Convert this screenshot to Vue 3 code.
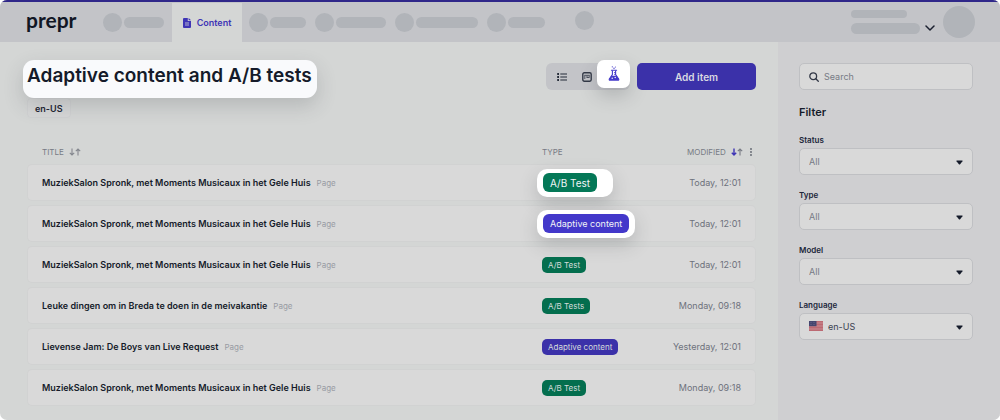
<script setup>
const before = [40]
const after = [36, 50, 62, 37]
const page = 'MuziekSalon Spronk, met Moments Musicaux in het Gele Huis'
const rows = [
  { title: page, type: 'A/B Test', kind: 'test', lit: 'wide', modified: 'Today, 12:01' },
  { title: page, type: 'Adaptive content', kind: 'adaptive', lit: 'snug', modified: 'Today, 12:01' },
  { title: page, type: 'A/B Test', kind: 'test', modified: 'Today, 12:01' },
  { title: 'Leuke dingen om in Breda te doen in de meivakantie', type: 'A/B Tests', kind: 'test', modified: 'Monday, 09:18' },
  { title: 'Lievense Jam: De Boys van Live Request', type: 'Adaptive content', kind: 'adaptive', modified: 'Yesterday, 12:01' },
  { title: page, type: 'A/B Test', kind: 'test', modified: 'Monday, 09:18' },
]
const filters = [
  { id: 'status', label: 'Status', value: 'All' },
  { id: 'type', label: 'Type', value: 'All' },
  { id: 'model', label: 'Model', value: 'All' },
  { id: 'language', label: 'Language', value: 'en-US', flag: true },
]
</script>

<template>
  <div class="app">
    <header class="topbar">
      <a class="logo" href="#">prepr</a>
      <nav class="nav">
        <span v-for="w in before" :key="w" class="ghost">
          <i class="dot"></i><i class="pill" :style="{ width: w + 'px' }"></i>
        </span>
        <a class="tab" href="#" aria-current="page">
          <svg width="8" height="10" viewBox="0 0 8 10" aria-hidden="true">
            <path d="M1 0h3.8v3H8v6a1 1 0 0 1-1 1H1a1 1 0 0 1-1-1V1a1 1 0 0 1 1-1z" fill="#3f35b5" />
            <path d="M5.6 0 8 2.3H5.6z" fill="#3f35b5" />
            <path d="M2 5h4M2 7h4" stroke="#d4d6d5" stroke-width=".8" />
          </svg>
          Content
        </a>
        <span v-for="w in after" :key="w" class="ghost">
          <i class="dot"></i><i class="pill" :style="{ width: w + 'px' }"></i>
        </span>
        <i class="dot lone"></i>
      </nav>
      <div class="account">
        <div class="names"><i class="pill thin"></i><i class="pill"></i></div>
        <button class="bare" aria-label="Account menu">
          <svg width="10" height="6" viewBox="0 0 10 6" fill="none" stroke="#1b2130" stroke-width="1.5" stroke-linecap="round" stroke-linejoin="round"><path d="M1 1l4 4 4-4" /></svg>
        </button>
        <i class="avatar"></i>
      </div>
    </header>

    <div class="body">
      <main class="main">
        <div class="head">
          <h1>Adaptive content and A/B tests</h1>
          <div class="tools">
            <div class="views">
              <button aria-label="List view">
                <svg width="10" height="8" viewBox="0 0 10 8" stroke="#252b38"><path d="M3.3 1H10M3.3 4H10M3.3 7H10" stroke-width="1.2" /><path d="M.2 1h1.8M.2 4h1.8M.2 7h1.8" stroke-width="1.8" /></svg>
              </button>
              <button aria-label="Board view">
                <svg width="10" height="10" viewBox="0 0 10 10" fill="none" stroke="#333947"><rect x=".8" y=".8" width="8.4" height="8.4" rx="1.4" stroke-width="1.4" /><path d="M2.3 3.3h5.4M2.8 3.5v3.5M5 3.5v2M7.2 3.5v2M4.6 5.5h2.8" stroke-width=".8" /></svg>
              </button>
              <button class="active" aria-label="Experiments view">
                <svg width="12" height="15" viewBox="0 0 12 15" fill="none" stroke="#4338ca"><path d="M3.4 4.3h5.2" stroke-width="1.1" stroke-linecap="round" /><path d="M4.4 4.5v4L1.3 13c-.3.7 0 1.2.7 1.2h8c.7 0 1-.5.7-1.2L7.6 8.5v-4" stroke-width="1.1" /><path d="M3.4 9.8h5.2l2.1 3.2c.2.7 0 1-.6 1H2c-.6 0-.8-.3-.6-1z" fill="#4338ca" stroke="none" /><circle cx="4.2" cy="12.3" r=".7" fill="#fff" stroke="none" /><circle cx="7.2" cy="11.5" r=".7" fill="#fff" stroke="none" /><path d="M6 6.5h1.4M6 8.3h1.4" stroke-width=".8" /><g fill="#4338ca" stroke="none"><circle cx="4.3" cy=".8" r=".6" /><circle cx="6" cy="2.3" r=".7" /><circle cx="7.5" cy=".9" r=".5" /></g></svg>
              </button>
            </div>
            <button class="add">Add item</button>
          </div>
        </div>
        <button class="locale">en-US</button>

        <table>
          <thead>
            <tr>
              <th class="c-title">TITLE
                <svg class="sort" width="12" height="8" viewBox="0 0 12 8" fill="none" stroke="#85888f" stroke-width="1.1"><path d="M3 .5v6.5M.8 4.8 3 7l2.2-2.2M9 7.5V1M6.8 3.2 9 1l2.2 2.2" /></svg>
              </th>
              <th class="c-type">TYPE</th>
              <th class="c-mod">MODIFIED
                <svg class="sort" width="12" height="8" viewBox="0 0 12 8" fill="none" stroke-width="1.1"><path d="M3 .5v6.5M.8 4.8 3 7l2.2-2.2" stroke="#3f35b5" stroke-width="1.4" /><path d="M9 7.5V1M6.8 3.2 9 1l2.2 2.2" stroke="#777a84" /></svg>
                <button class="bare more" aria-label="Columns"><svg width="4" height="8" viewBox="0 0 4 8" fill="#5f636e"><circle cx="2" cy="1" r=".9" /><circle cx="2" cy="4" r=".9" /><circle cx="2" cy="7" r=".9" /></svg></button>
              </th>
            </tr>
          </thead>
          <tbody>
            <tr v-for="(r, i) in rows" :key="i">
              <td class="c-title"><strong>{{ r.title }}</strong><small>Page</small></td>
              <td class="c-type">
                <span :class="r.lit && ['spot', r.lit]"><span class="badge" :class="r.kind">{{ r.type }}</span></span>
              </td>
              <td class="c-mod">{{ r.modified }}</td>
            </tr>
          </tbody>
        </table>
      </main>

      <aside class="side">
        <div class="search">
          <svg width="10" height="10" viewBox="0 0 10 10" fill="none" stroke="#333947" stroke-width="1.3" stroke-linecap="round"><circle cx="4.2" cy="4.2" r="3.4" /><path d="M6.8 6.8 9.3 9.3" /></svg>
          <input type="search" placeholder="Search" aria-label="Search" />
        </div>
        <h2>Filter</h2>
        <div v-for="f in filters" :key="f.id" class="field">
          <label :for="f.id">{{ f.label }}</label>
          <div class="pick" :class="{ flagged: f.flag }">
            <svg v-if="f.flag" class="flag" width="14" height="10" viewBox="0 0 14 10" aria-hidden="true">
              <rect width="14" height="10" fill="#c98d93" />
              <path d="M0 .5h14M0 2h14M0 3.5h14M0 5h14M0 6.5h14M0 8h14M0 9.5h14" stroke="#b9606a" stroke-width=".8" />
              <rect width="7.5" height="5.2" fill="#45466f" />
              <path d="M1 1.5h6M1 3.5h6" stroke="#8587a5" stroke-width=".5" stroke-dasharray=".5 1" />
            </svg>
            <select :id="f.id"><option>{{ f.value }}</option></select>
            <svg class="caret" width="7" height="5" viewBox="0 0 8 5" aria-hidden="true"><path d="M1 .3h6q1 0 .4.8L4.7 4.4q-.7.7-1.4 0L.6 1.1Q0 .3 1 .3z" fill="#151b2a" /></svg>
          </div>
        </div>
      </aside>
    </div>
  </div>
</template>

<style>
body { margin: 0; background: #fff; }
</style>

<style scoped>
* { box-sizing: border-box; }
.app {
  display: flex; flex-direction: column; min-height: 100vh; overflow: hidden;
  border-radius: 7px; background: #d4d6d5; color: #151b2a;
  font-family: Inter, "Liberation Sans", sans-serif; font-size: 9px;
}
button, input, select { font: inherit; color: inherit; border: 0; background: none; padding: 0; margin: 0; }
svg { display: block; flex: none; }
.bare { display: inline-flex; }

.topbar { display: flex; height: 42px; border-top: 2px solid #2f2789; background: #c3c4c8; padding: 0 25px 0 26px; }
.logo {
  width: 68px; padding-top: 6px; color: #111624; text-decoration: none;
  font: 700 21px/24px Lato, sans-serif;
}
.nav { display: flex; flex: 1; align-items: center; }
.ghost { display: flex; align-items: center; gap: 2px; margin-left: 9px; }
.dot { width: 19px; height: 19px; border-radius: 50%; background: #b1b4b9; }
.pill { height: 11px; border-radius: 6px; background: #b1b4b9; }
.lone { margin: 0 0 4px 30px; }
.tab {
  display: flex; align-items: center; justify-content: center; gap: 6px; align-self: stretch;
  width: 70px; margin: 1px -2px 0 8px; background: #d4d6d5; color: #3f35b5;
  font-weight: 600; text-decoration: none;
}
.account { display: flex; align-items: center; gap: 5px; }
.account .bare { margin: 12px 3px 0 0; }
.names { display: flex; flex-direction: column; gap: 5px; width: 69px; }
.thin { width: 56px; height: 8px; }
.avatar { width: 32px; height: 32px; border-radius: 50%; background: #b1b4b9; }

.body { display: flex; flex: 1; }
.main { flex: 1; min-width: 0; padding: 18px 22px 10px 27px; }
.head { display: flex; justify-content: space-between; align-items: flex-start; }
h1 {
  margin: 0 0 0 -4px; padding: 4px 5px 10px 4px; border-radius: 11px; background: #f9fafc;
  box-shadow: 0 8px 20px rgba(60, 64, 70, .2);
  font-size: 19px; line-height: 24px; font-weight: 600; white-space: nowrap;
}
.tools { display: flex; gap: 7px; padding-top: 3px; }
.views { display: flex; height: 27px; border-radius: 6px; background: #c3c4c8; padding-left: 3px; }
.views button { display: flex; align-items: center; justify-content: center; width: 25px; }
.views .active {
  width: 33px; height: 28px; margin: -3px 0 0 -2px; padding-bottom: 2px; border-radius: 7px; background: #fff;
  box-shadow: 0 8px 18px rgba(60, 64, 70, .22);
}
.add { width: 119px; height: 27px; border-radius: 5px; background: #3b31a9; color: #d9d9e2; font-size: 10px; font-weight: 600; }
.locale {
  display: block; height: 20px; padding: 0 7px; border: 1px solid #d0d1d2; border-radius: 4px;
  background: #d6d7d7; color: #1f2533; font-weight: 600;
}

table { width: 100%; margin-top: 22px; border-collapse: separate; border-spacing: 0 4px; table-layout: fixed; }
th { height: 16px; padding: 0; font-size: 8px; line-height: 16px; font-weight: 400; color: #777a84; text-align: left; white-space: nowrap; }
.sort { display: inline-block; margin-left: 3px; vertical-align: -1px; }
.more { margin-left: 6px; vertical-align: -1px; }
th.c-mod { padding-right: 3px; }
td { height: 37px; padding: 0; border: solid #d1d2d2; border-width: 1px 0; background: #d9d9d9; white-space: nowrap; }
td:first-child { border-left-width: 1px; border-radius: 5px 0 0 5px; }
td:last-child { border-right-width: 1px; border-radius: 0 5px 5px 0; }
th.c-title { padding-left: 15px; }
td.c-title { padding-left: 14px; }
.c-type { width: 94px; }
.c-mod { width: 120px; text-align: right; }
td.c-mod { padding-right: 14px; color: #6d717c; }
strong { font-weight: 600; }
small { margin-left: 6px; color: #989ba3; font-size: 8px; }
.badge { display: inline-flex; align-items: center; height: 16px; padding: 0 6px; border-radius: 5px; font-size: 8px; color: #d5dcdb; vertical-align: middle; }
.test { background: #046e4e; }
.adaptive { background: #3b31a9; }
.spot {
  display: inline-flex; align-items: center; height: 28px; margin-left: -5px; padding: 0 6px; border-radius: 10px;
  background: #fff; vertical-align: middle; box-shadow: 0 7px 18px rgba(60, 64, 70, .22);
}
.spot.wide { padding-right: 16px; }
.spot .badge { height: 19px; padding: 0 7px; border-radius: 6px; color: #f2f5f7; font-size: 9px; }
.spot.wide .badge { font-size: 10px; }
.spot .test { background: #047857; }
.spot .adaptive { background: #4338ca; }

.side { width: 222px; padding: 21px 27px 0 21px; background: #cfcfd1; }
.search { display: flex; align-items: center; gap: 5px; height: 27px; padding: 0 9px; border: 1px solid #bfc0c3; border-radius: 5px; background: #d9d9d9; }
.search input { flex: 1; min-width: 0; outline: 0; }
.search input::placeholder { color: #777b85; opacity: 1; }
h2 { margin: 14px 0; font-size: 11px; line-height: 16px; font-weight: 600; }
.field { height: 55px; }
.field label { display: block; height: 14px; font-size: 8px; line-height: 12px; font-weight: 600; color: #20263a; }
.pick { position: relative; }
.pick select {
  appearance: none; display: block; width: 100%; height: 27px; padding: 0 24px 0 9px;
  border: 1px solid #bfc0c3; border-radius: 5px; background: #d9d9d9; color: #777b85;
}
.flagged select { padding-left: 28px; color: #3b4150; }
.flag { position: absolute; left: 10px; top: 8px; }
.caret { position: absolute; right: 10px; top: 12px; pointer-events: none; }
</style>
